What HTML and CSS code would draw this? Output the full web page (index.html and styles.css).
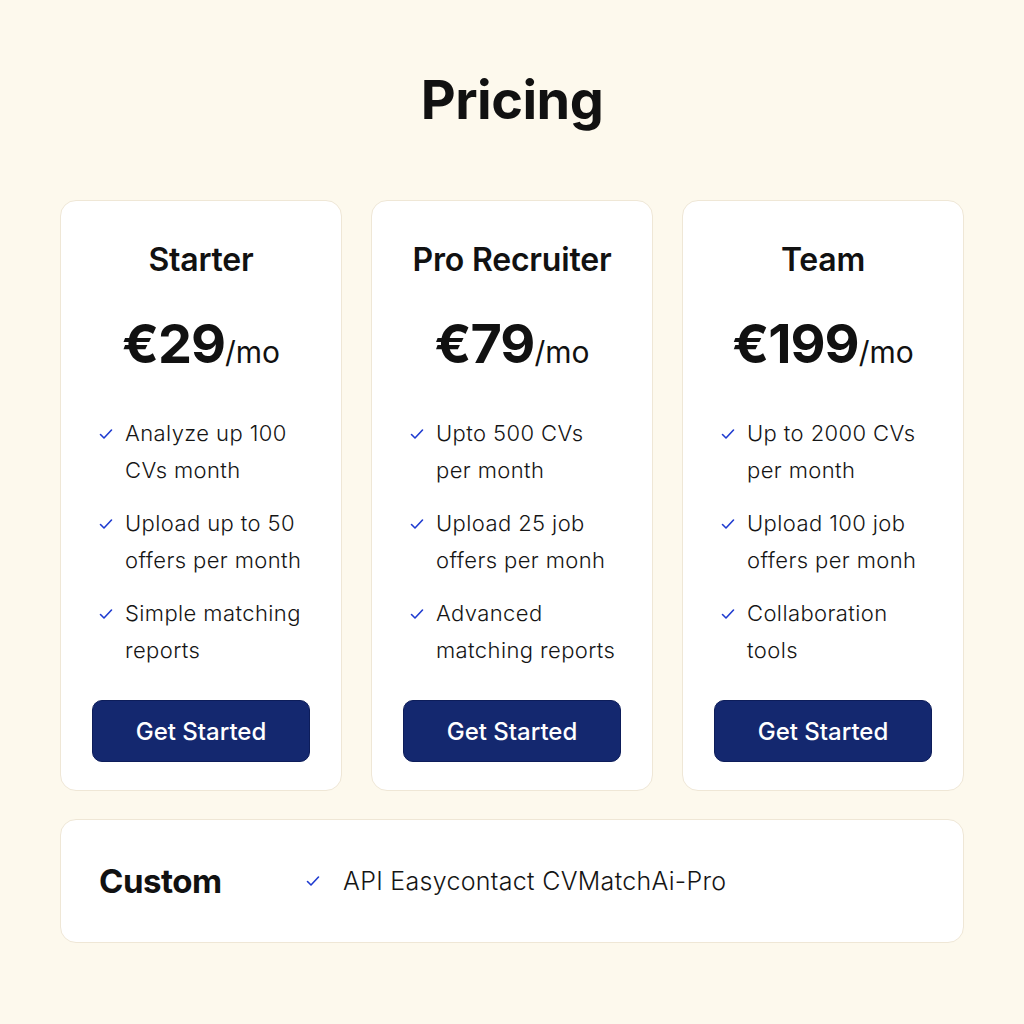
FILE: index.html
```html
<!DOCTYPE html>
<html lang="en">
<head>
<meta charset="utf-8">
<title>Pricing</title>
<link rel="stylesheet" href="styles.css">
</head>
<body>
<main class="page">
  <h1 class="title">Pricing</h1>
  <div class="plans">
    <section class="card">
      <h2 class="plan-name">Starter</h2>
      <div class="price"><span class="amount">€29</span><span class="per">/mo</span></div>
      <ul class="features">
        <li><span class="check"><svg viewBox="0 0 16 16"><path d="M2.5 8.5 L6 12 L13.5 4"/></svg></span><span>Analyze up 100 CVs month</span></li>
        <li><span class="check"><svg viewBox="0 0 16 16"><path d="M2.5 8.5 L6 12 L13.5 4"/></svg></span><span>Upload up to 50 offers per month</span></li>
        <li><span class="check"><svg viewBox="0 0 16 16"><path d="M2.5 8.5 L6 12 L13.5 4"/></svg></span><span>Simple matching reports</span></li>
      </ul>
      <button class="btn">Get Started</button>
    </section>
    <section class="card">
      <h2 class="plan-name">Pro Recruiter</h2>
      <div class="price"><span class="amount">€79</span><span class="per">/mo</span></div>
      <ul class="features">
        <li><span class="check"><svg viewBox="0 0 16 16"><path d="M2.5 8.5 L6 12 L13.5 4"/></svg></span><span>Upto 500 CVs per month</span></li>
        <li><span class="check"><svg viewBox="0 0 16 16"><path d="M2.5 8.5 L6 12 L13.5 4"/></svg></span><span>Upload 25 job offers per monh</span></li>
        <li><span class="check"><svg viewBox="0 0 16 16"><path d="M2.5 8.5 L6 12 L13.5 4"/></svg></span><span>Advanced matching reports</span></li>
      </ul>
      <button class="btn">Get Started</button>
    </section>
    <section class="card">
      <h2 class="plan-name">Team</h2>
      <div class="price"><span class="amount">€199</span><span class="per">/mo</span></div>
      <ul class="features">
        <li><span class="check"><svg viewBox="0 0 16 16"><path d="M2.5 8.5 L6 12 L13.5 4"/></svg></span><span>Up to 2000 CVs per month</span></li>
        <li><span class="check"><svg viewBox="0 0 16 16"><path d="M2.5 8.5 L6 12 L13.5 4"/></svg></span><span>Upload 100 job offers per monh</span></li>
        <li><span class="check"><svg viewBox="0 0 16 16"><path d="M2.5 8.5 L6 12 L13.5 4"/></svg></span><span>Collaboration tools</span></li>
      </ul>
      <button class="btn">Get Started</button>
    </section>
  </div>
  <section class="custom">
    <h2 class="custom-name">Custom</h2>
    <div class="custom-feature"><span class="check"><svg viewBox="0 0 16 16"><path d="M2.5 8.5 L6 12 L13.5 4"/></svg></span><span>API Easycontact CVMatchAi-Pro</span></div>
  </section>
</main>
</body>
</html>
```

FILE: styles.css
```css
* { box-sizing: border-box; }
html, body { margin: 0; padding: 0; }
body {
  background: #fdf9ed;
  font-family: Inter, "Noto Sans", sans-serif;
  color: #111111;
  width: 1024px;
  height: 1024px;
}
.page {
  padding: 64px 60px 0 60px;
}
.title {
  margin: 0;
  text-align: center;
  font-size: 54px;
  line-height: 72px;
  font-weight: 700;
  letter-spacing: -0.5px;
}
.plans {
  margin-top: 64px;
  display: grid;
  grid-template-columns: repeat(3, 282px);
  column-gap: 29px;
}
.card {
  background: #ffffff;
  border: 1px solid #efe7d6;
  border-radius: 16px;
  padding: 39px 31px 28px 31px;
  display: flex;
  flex-direction: column;
  height: 591px;
}
.plan-name {
  margin: 0;
  text-align: center;
  font-size: 32px;
  line-height: 40px;
  font-weight: 600;
  letter-spacing: -0.2px;
}
.price {
  margin-top: 32px;
  text-align: center;
  line-height: 64px;
  height: 64px;
}
.amount {
  font-size: 54px;
  font-weight: 700;
  letter-spacing: -1px;
}
.per {
  font-size: 30px;
  font-weight: 400;
}
.features {
  list-style: none;
  margin: 39px 0 0 0;
  padding: 0;
  display: flex;
  flex-direction: column;
  gap: 16px;
}
.features li {
  display: flex;
  align-items: flex-start;
  font-size: 22px;
  line-height: 37px;
  font-weight: 350;
  letter-spacing: 0.4px;
  color: #151515;
  padding-left: 6px;
}
.check {
  flex: none;
  width: 27px;
  height: 37px;
  display: flex;
  align-items: center;
}
.check svg {
  width: 16px;
  height: 16px;
  fill: none;
  stroke: #1f3bd0;
  stroke-width: 1.6;
  stroke-linecap: round;
  stroke-linejoin: round;
}
.btn {
  margin-top: auto;
  height: 62px;
  width: 100%;
  border: 1px solid #0d1d5a;
  border-radius: 10px;
  background: #14286f;
  color: #ffffff;
  font-family: Inter, "Noto Sans", sans-serif;
  font-size: 24px;
  font-weight: 500;
  cursor: pointer;
}
.custom {
  margin-top: 28px;
  background: #ffffff;
  border: 1px solid #efe7d6;
  border-radius: 16px;
  height: 124px;
  display: flex;
  align-items: center;
  padding-left: 38px;
}
.custom-name {
  margin: 0;
  width: 206px;
  font-size: 33px;
  font-weight: 700;
  letter-spacing: -0.5px;
}
.custom-feature {
  display: flex;
  align-items: center;
  font-size: 25px;
  line-height: 37px;
  font-weight: 350;
  letter-spacing: 0.3px;
  color: #151515;
}
.custom-feature .check {
  width: 38px;
}
```
